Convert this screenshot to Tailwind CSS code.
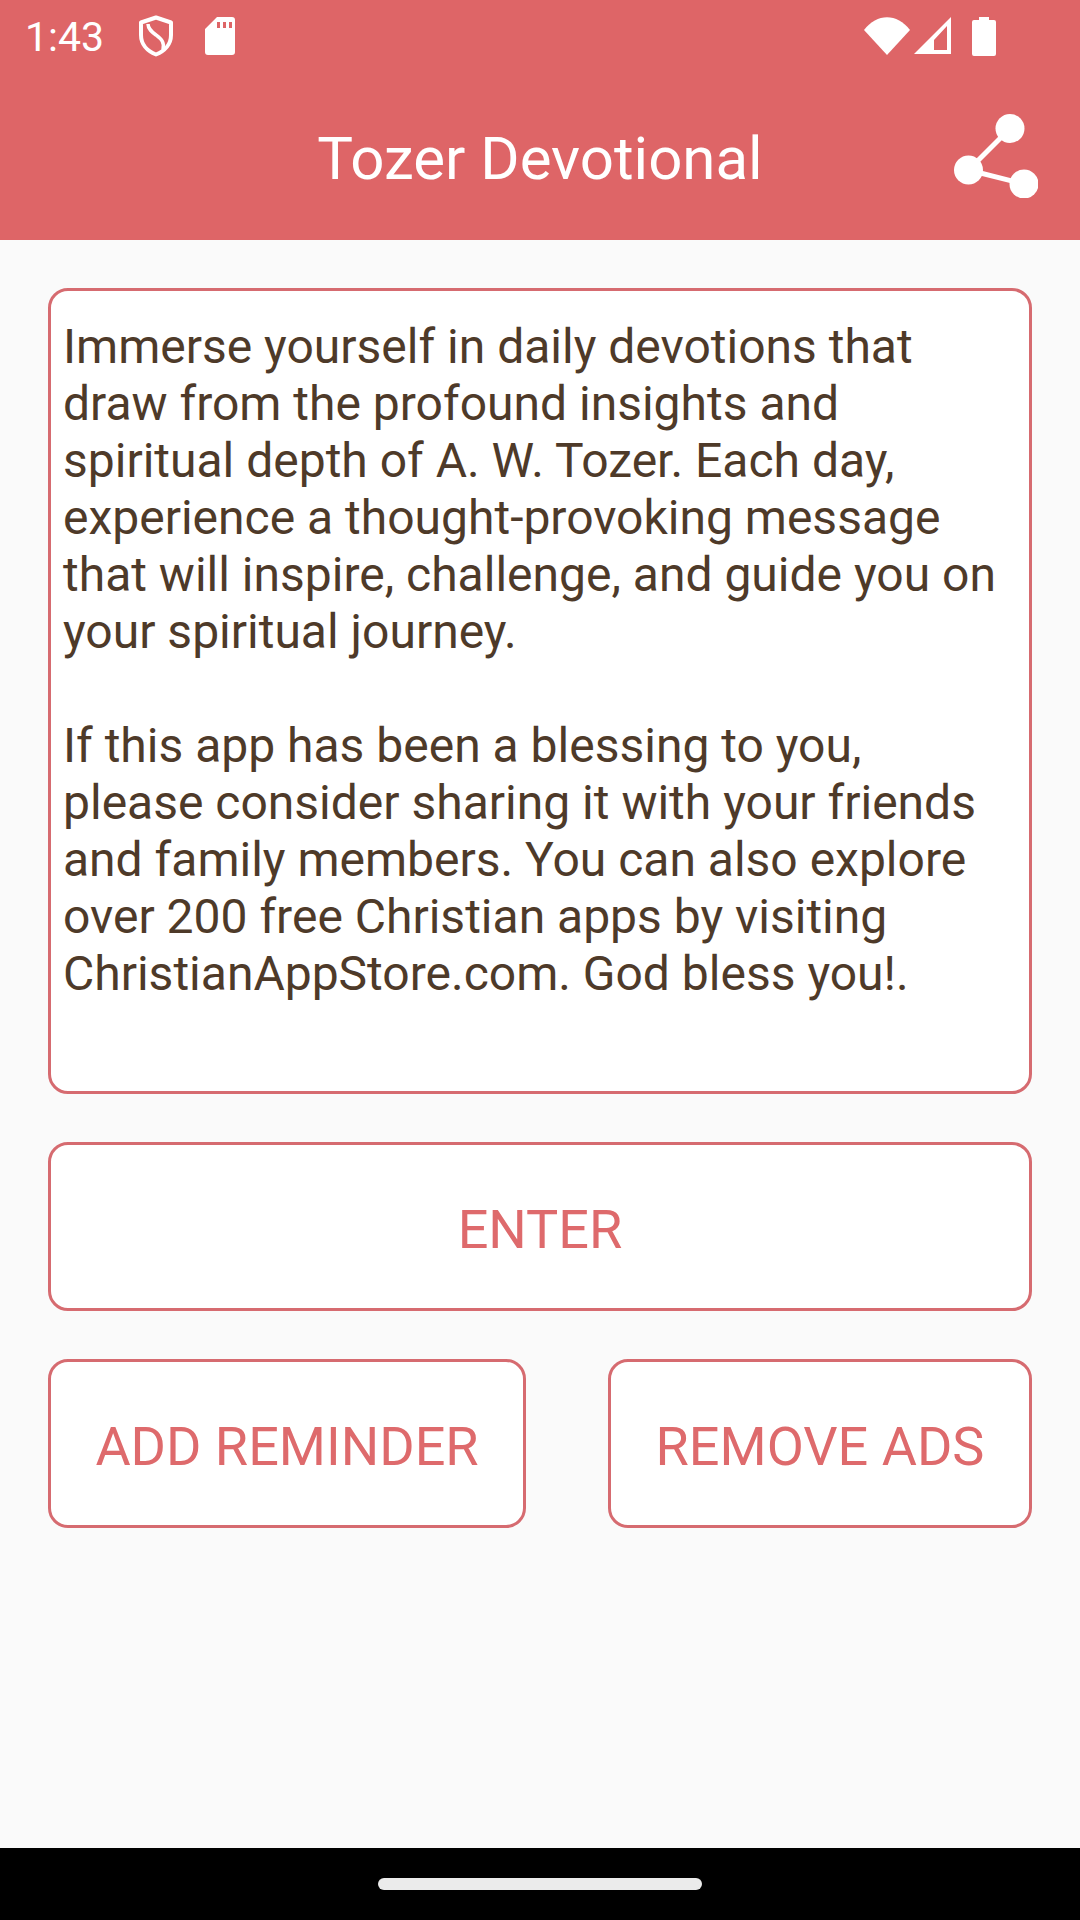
<!DOCTYPE html>
<html lang="en">
<head>
    <meta charset="UTF-8">
    <meta name="viewport" content="width=device-width, initial-scale=1.0">
    <title>Tozer Devotional</title>
    <script src="https://cdn.jsdelivr.net/npm/@tailwindcss/browser@4"></script>
</head>
<body class="bg-[#fafafa] font-['Roboto',sans-serif]">
    <div class="w-[1080px] h-[1920px] flex flex-col overflow-hidden">
        <!-- status bar + app bar -->
        <header class="h-[240px] shrink-0 bg-[#de6567] text-white flex flex-col">
            <div class="h-[72px] flex items-center justify-between pl-[25px] pr-[84px]">
                <div class="flex items-center">
                    <span class="text-[41px] leading-none w-[113px] pt-[2px]">1:43</span>
                    <svg class="w-[36px] h-[42px]" viewBox="0 0 36 42" fill="none" stroke="white" stroke-width="4">
                        <path d="M18 2.5 L33 7.5 V20 C33 29 27 36 18 39.5 C9 36 3 29 3 20 V7.5 Z" stroke-linejoin="round"/>
                        <path d="M10 9 C10 14 14 17 18 20 C23 24 27 27 25 35" stroke-width="3.5"/>
                    </svg>
                    <svg class="w-[30px] h-[38px] ml-[31px]" viewBox="0 0 30 38" fill="white">
                        <path fill-rule="evenodd" d="M12 0 H27 A3 3 0 0 1 30 3 V35 A3 3 0 0 1 27 38 H3 A3 3 0 0 1 0 35 V12 Z M12 5 V11 H15 V5 Z M18 5 V11 H21 V5 Z M24 5 V11 H27 V5 Z"/>
                    </svg>
                </div>
                <div class="flex items-center">
                    <svg class="w-[46px] h-[38px]" viewBox="0 0 46 38" fill="white">
                        <path d="M0 13 C13 -4 33 -4 46 13 L23 38 Z"/>
                    </svg>
                    <svg class="w-[37px] h-[38px] ml-[4px]" viewBox="0 0 37 38" fill="white">
                        <path fill-rule="evenodd" d="M37 0 V37 H0 Z M33 9 L20 23 V33 H33 Z"/>
                    </svg>
                    <svg class="w-[24px] h-[39px] ml-[21px]" viewBox="0 0 24 39" fill="white">
                        <path d="M7 0 H17 V3 H22 A2 2 0 0 1 24 5 V37 A2 2 0 0 1 22 39 H2 A2 2 0 0 1 0 37 V5 A2 2 0 0 1 2 3 H7 Z"/>
                    </svg>
                </div>
            </div>
            <div class="relative flex-1 flex items-center justify-center">
                <h1 class="text-[60px] leading-none font-normal pt-[5px]">Tozer Devotional</h1>
                <svg class="absolute left-[954px] top-[42px] w-[84px] h-[84px]" viewBox="0 0 84 84" fill="white">
                    <circle cx="56" cy="14.500" r="14.5"/>
                    <circle cx="14.500" cy="56" r="14.5"/>
                    <circle cx="70" cy="70" r="14.5"/>
                    <path d="M14.5 56 L56 14.5 M14.5 56 L70 70" stroke="white" stroke-width="5" fill="none"/>
                </svg>
            </div>
        </header>

        <!-- content -->
        <main class="flex-1 px-[48px] pt-[48px]">
            <div class="h-[806px] bg-white border-[3px] border-[#d66b70] rounded-[20px] pl-[12px] pr-[8px] pt-[27px] text-[48px] leading-[57px] text-[#4e3a29]">
                <p>Immerse yourself in daily devotions that<br>draw from the profound insights and<br>spiritual depth of A. W. Tozer. Each day,<br>experience a thought-provoking message<br>that will inspire, challenge, and guide you on<br>your spiritual journey.</p>
                <p class="mt-[57px]">If this app has been a blessing to you,<br>please consider sharing it with your friends<br>and family members. You can also explore<br>over 200 free Christian apps by visiting<br>ChristianAppStore.com. God bless you!.</p>
            </div>
            <button class="mt-[48px] w-full h-[169px] pt-[6px] bg-white border-[3px] border-[#d66b70] rounded-[20px] text-[54px] text-[#de6a6c] leading-none">ENTER</button>
            <div class="mt-[48px] flex justify-between">
                <button class="w-[478px] h-[169px] pt-[6px] bg-white border-[3px] border-[#d66b70] rounded-[20px] text-[54px] text-[#de6a6c] leading-none">ADD REMINDER</button>
                <button class="w-[424px] h-[169px] pt-[6px] bg-white border-[3px] border-[#d66b70] rounded-[20px] text-[54px] text-[#de6a6c] leading-none">REMOVE ADS</button>
            </div>
        </main>

        <!-- nav bar -->
        <footer class="h-[72px] shrink-0 bg-black flex items-center justify-center">
            <div class="w-[324px] h-[12px] rounded-full bg-[#ebebeb]"></div>
        </footer>
    </div>
</body>
</html>
